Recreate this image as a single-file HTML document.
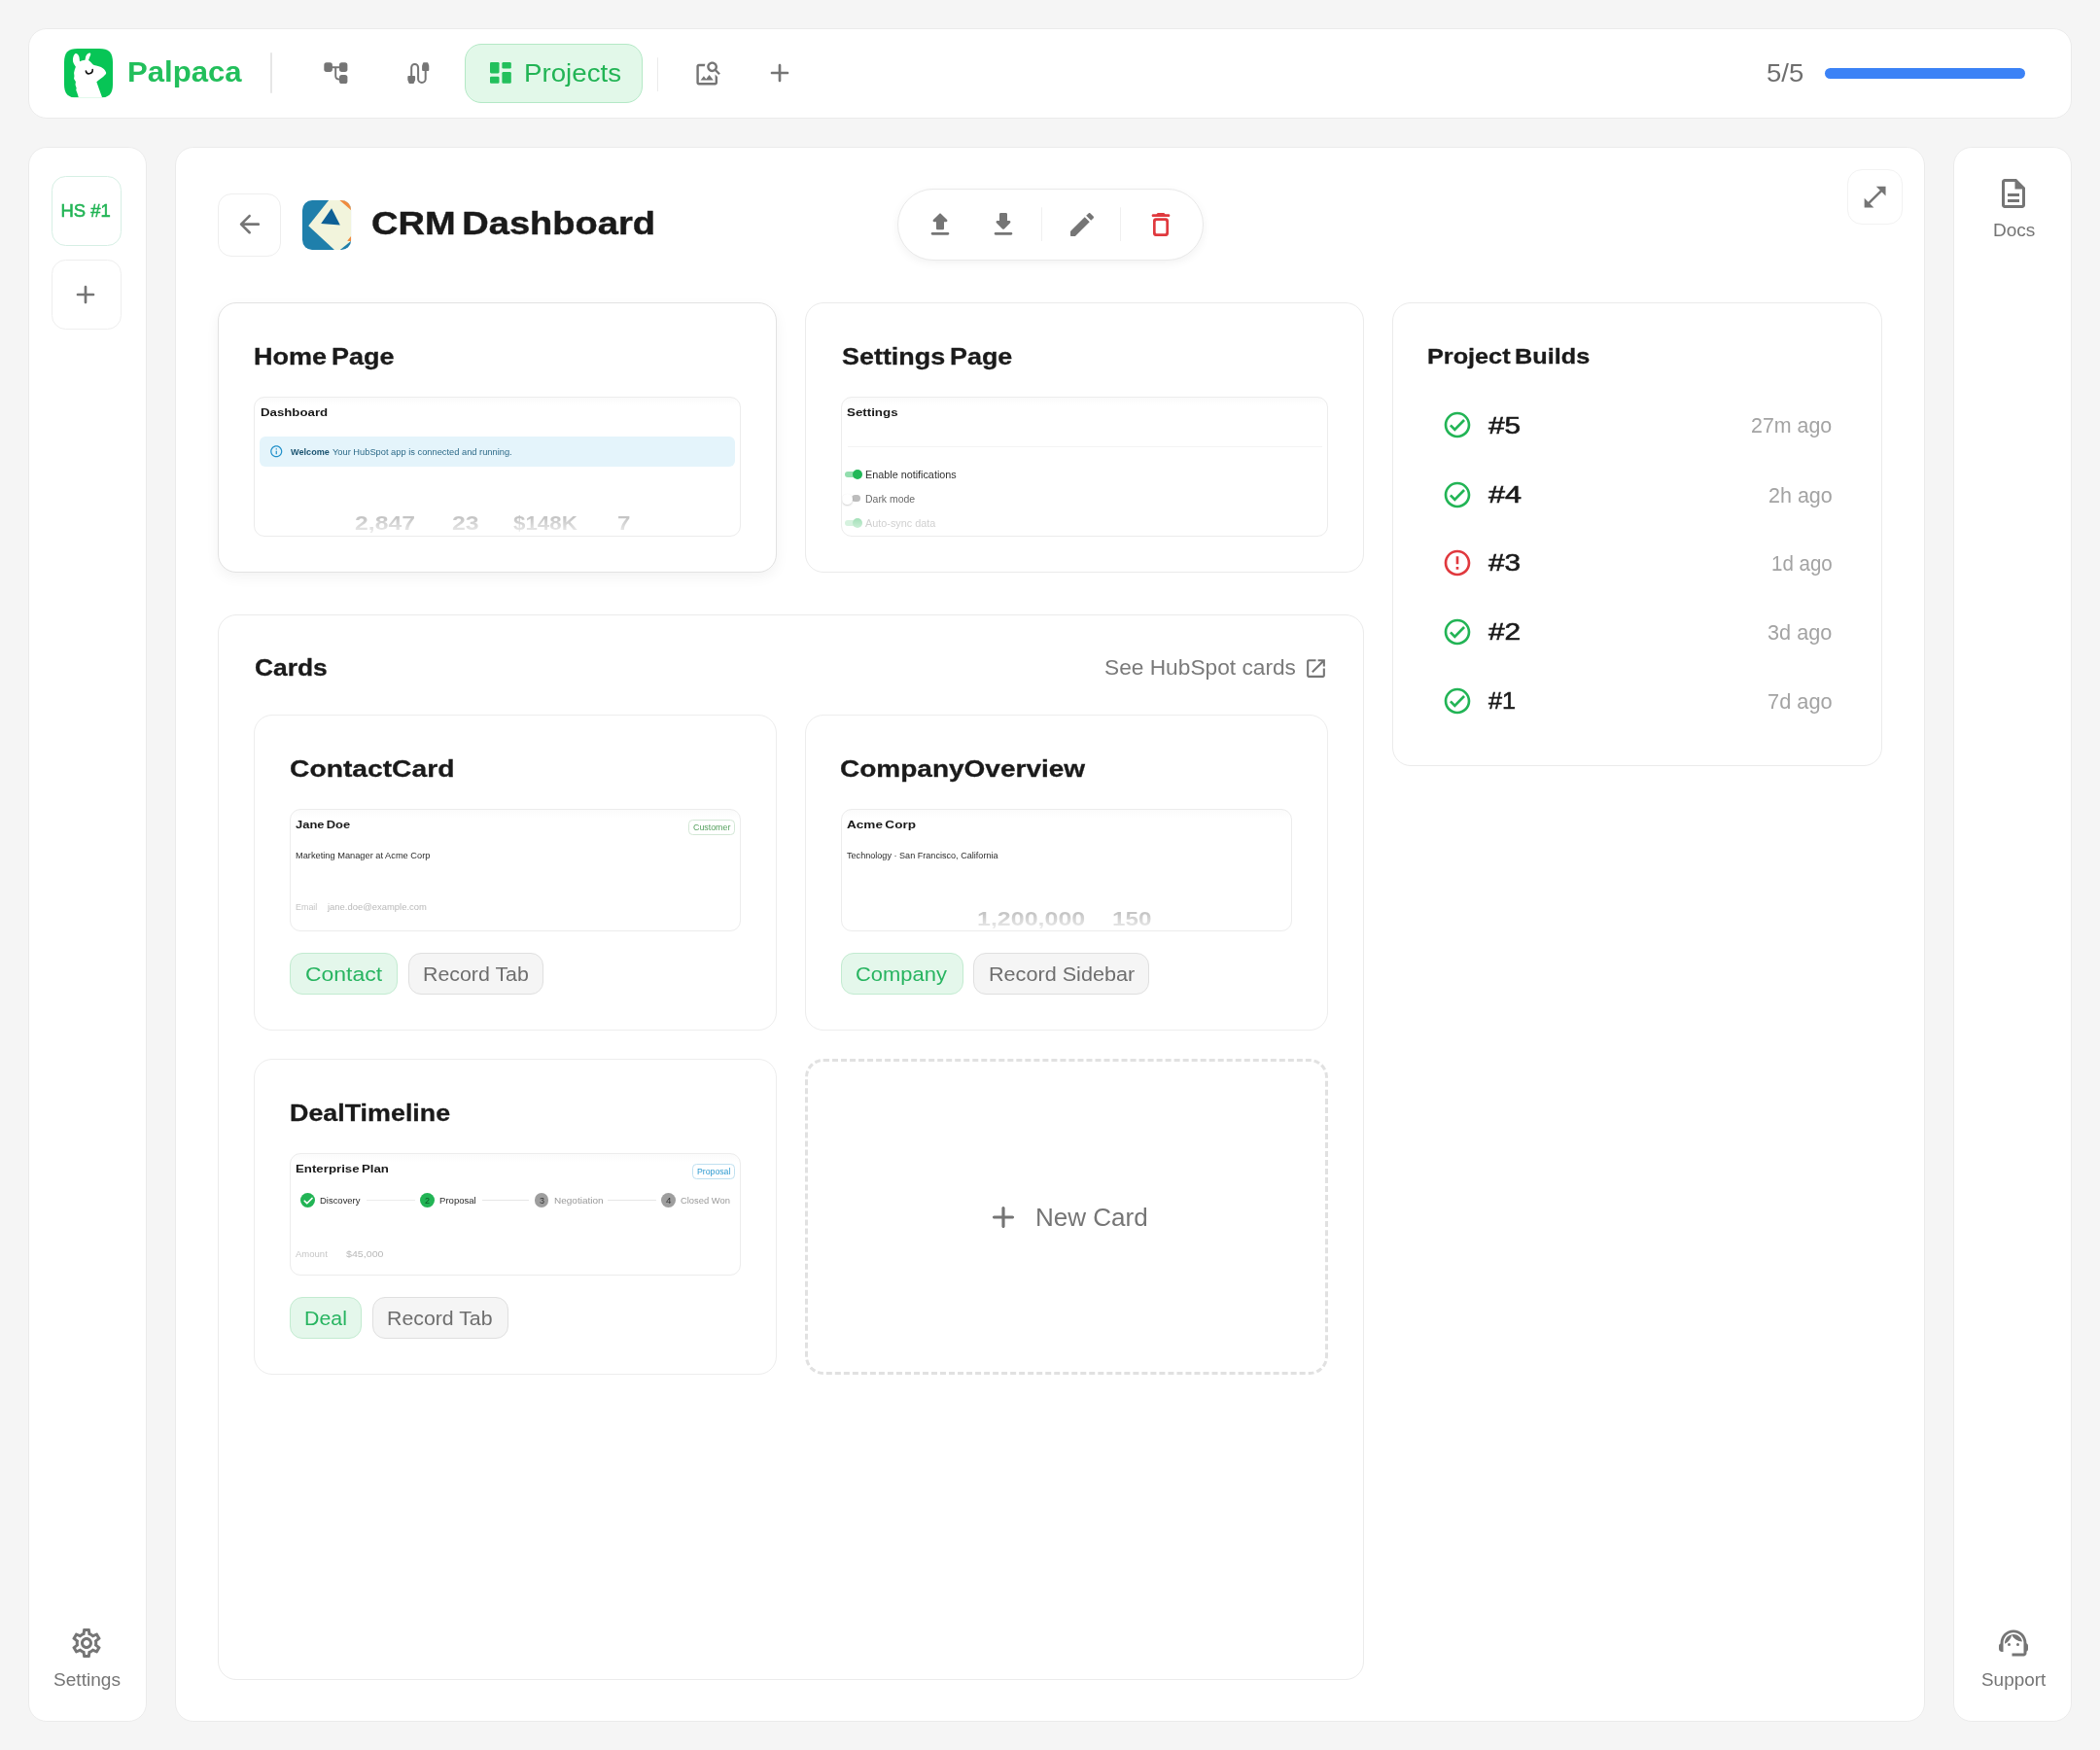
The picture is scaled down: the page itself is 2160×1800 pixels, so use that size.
<!DOCTYPE html>
<html lang="en"><head><meta charset="utf-8"><title>Palpaca - CRM Dashboard</title><style>
html,body{margin:0;padding:0}
body{width:2160px;height:1800px;background:#f5f5f5;position:relative;overflow:hidden;font-family:"Liberation Sans",sans-serif}
#root{position:absolute;left:0;top:0;width:2160px;height:1800px;will-change:transform}
.b{position:absolute;box-sizing:border-box}
.i{position:absolute;display:block;overflow:visible}
.t{position:absolute;white-space:nowrap;line-height:1;transform-origin:0 50%;display:block}
</style></head>
<body>
<div id="root">
<div class="b" style="left:29px;top:29px;width:2102px;height:93px;border-radius:19px;background:#fff;border:1px solid #ebebeb;"></div>
<div class="b" style="left:29px;top:151px;width:122px;height:1620px;border-radius:19px;background:#fff;border:1px solid #ebebeb;"></div>
<div class="b" style="left:180px;top:151px;width:1800px;height:1620px;border-radius:19px;background:#fff;border:1px solid #ebebeb;"></div>
<div class="b" style="left:2009px;top:151px;width:122px;height:1620px;border-radius:19px;background:#fff;border:1px solid #ebebeb;"></div>
<svg class="i" style="left:66px;top:50.3px" width="50" height="50.6" viewBox="0 0 100 100" preserveAspectRatio="none">
<defs><clipPath id="lc"><path d="M50 0H72C92 0 100 8 100 28V72C100 92 92 100 72 100H28C8 100 0 92 0 72V28C0 8 8 0 28 0z"/></clipPath></defs>
<g clip-path="url(#lc)"><rect width="100" height="100" fill="#07c556"/>
<path fill="#fff" d="M30 101 L28.9 97 L26.7 89.7 L24.5 84.6 L25.3 80.2 L23 73.6 L23.8 67 L20.1 61.2 L20.9 55.3 L20.1 49.5 L21.600 42.9 L23.8 37 L20 31 C17.5 27 17.5 22 18.5 18 C19.5 13 22 9.500 24.5 9.900 C28 10.5 30.5 15 31 18 L32 26 C35 24.5 39 23.5 43 23 L44.3 16.5 C46 12 50 8.500 53.8 9.200 C55.5 10 54 14 52.5 17 L50 23.8 C53 25.5 56 28.5 58 31 C60 33 63 34 66 34.5 C70 35.2 73 36.3 75.8 37.7 C80 39.8 84 43 86 48 C86.8 50.5 86 52 84 53.5 C82.5 55.5 81 57 79.5 58 L70.7 64 C69 65.2 67.5 66.5 66.7 67.8 L72 82.4 L78.8 101 Z"/>
<path d="M44.700 45.500 C45.5 49.5 48 51.5 51.5 51 C56 50.3 58.8 46.5 58.4 42.500" fill="none" stroke="#151515" stroke-width="3.2" stroke-linecap="round"/></g>
</svg>
<span class="t" style="left:130.64px;top:59.01px;font-size:29.36px;font-weight:700;color:#22bf5b;transform:scaleX(1.0591);">Palpaca</span>
<div class="b" style="left:278px;top:54px;width:2px;height:42px;border-radius:1px;background:#e6e6e6;"></div>
<svg class="i" style="left:333px;top:64px" width="25" height="22.5" viewBox="0 0 25 22.5" fill="#757575">
<rect x=".3" y=".3" width="8.6" height="9.6" rx="2.6"/><rect x="16" y=".3" width="8.400" height="9.600" rx="2.600"/><rect x="16" y="13" width="8.400" height="9.100" rx="2.600"/>
<path d="M8 5.200H17M12.200 5.200V14Q12.200 17.700 16.500 17.700" fill="none" stroke="#757575" stroke-width="1.9"/></svg>
<svg class="i" style="left:419px;top:64px" width="22.6" height="22.4" viewBox="0 0 22.6 22.4" fill="#757575">
<path d="M4.200 15V5.450A3.450 3.450 0 0 1 11.100 5.450V17.200A3.800 3.800 0 0 0 18.700 17.200V8.500" fill="none" stroke="#757575" stroke-width="2"/>
<path d="M1.300 14h5.800a1 1 0 0 1 1 1v3.200l-1.300 3.400a.8.800 0 0 1-.7.500H2.300a.8.800 0 0 1-.7-.5L.3 18.200V15a1 1 0 0 1 1-1z"/>
<path d="M16.800.300h3.800a.8.800 0 0 1 .7.500l1 3V8a1 1 0 0 1-1 1h-5.200a1 1 0 0 1-1-1V3.800l1-3a.8.800 0 0 1 .7-.5z"/></svg>
<div class="b" style="left:478px;top:45px;width:183px;height:60.5px;border-radius:17px;background:#e2f8e9;border:1px solid #b4e9c6;"></div>
<svg class="i" style="left:504.3px;top:64.3px" width="21.8" height="21.7" viewBox="0 0 21.8 21.7" fill="#22c05c">
<rect x="0" y="0" width="9.500" height="11.400" rx="1.300"/><rect x="0" y="14.800" width="9.500" height="6.900" rx="1.300"/><rect x="12.400" y="0" width="9.400" height="6.500" rx="1.300"/><rect x="12.400" y="10" width="9.400" height="11.700" rx="1.300"/></svg>
<span class="t" style="left:538.83px;top:63.01px;font-size:25.58px;color:#22b455;transform:scaleX(1.0825);">Projects</span>
<div class="b" style="left:676.3px;top:58.5px;width:1.0px;height:35.0px;border-radius:1px;background:#ebebeb;"></div>
<svg class="i" style="left:713.8px;top:61.0px" width="28.8" height="28.8" viewBox="0 0 24 24" fill="#757575" ><path d="M18 13v7H4V6h5.02c.05-.71.22-1.38.48-2H4c-1.1 0-2 .9-2 2v14c0 1.1.9 2 2 2h14c1.1 0 2-.9 2-2v-5l-2-2zm-1.5 5h-11l2.75-3.53 1.96 2.36 2.75-3.54L16.5 18zm2.8-9.11c.44-.7.7-1.51.7-2.39C20 4.01 17.99 2 15.5 2S11 4.01 11 6.5s2.01 4.5 4.49 4.5c.88 0 1.7-.26 2.39-.7L21 13.42 22.42 12 19.3 8.89zM15.5 9C14.12 9 13 7.88 13 6.5S14.12 4 15.5 4 18 5.12 18 6.5 16.88 9 15.5 9z"/></svg>
<svg class="i" style="left:786.2px;top:59.3px" width="32" height="32" viewBox="0 0 24 24" fill="#757575" ><path d="M18 13h-5v5c0 .550-.450 1-1 1s-1-.450-1-1v-5H6c-.550 0-1-.450-1-1s.450-1 1-1h5V6c0-.550.450-1 1-1s1 .450 1 1v5h5c.550 0 1 .450 1 1s-.450 1-1 1z"/></svg>
<span class="t" style="left:1816.89px;top:64.01px;font-size:24.85px;color:#6e6e6e;transform:scaleX(1.1094);">5/5</span>
<div class="b" style="left:1877px;top:70px;width:206px;height:11px;border-radius:6px;background:#3b82f6;"></div>
<div class="b" style="left:53px;top:181px;width:72px;height:72px;border-radius:14.5px;background:#fff;border:1px solid #d6efe4;"></div>
<span class="t" style="left:62.40px;top:208.01px;font-size:18.46px;color:#22b455;-webkit-text-stroke:0.55px #22b455;">HS #1</span>
<div class="b" style="left:53px;top:267px;width:72px;height:72px;border-radius:14.5px;background:#fff;border:1px solid #eeeeee;"></div>
<svg class="i" style="left:72.1px;top:287.2px" width="32" height="32" viewBox="0 0 24 24" fill="#757575" ><path d="M18 13h-5v5c0 .550-.450 1-1 1s-1-.450-1-1v-5H6c-.550 0-1-.450-1-1s.450-1 1-1h5V6c0-.550.450-1 1-1s1 .450 1 1v5h5c.550 0 1 .450 1 1s-.450 1-1 1z"/></svg>
<svg class="i" style="left:71.0px;top:1672.0px" width="36" height="36" viewBox="0 0 24 24" fill="#757575" ><path d="M19.43 12.98c.04-.32.07-.64.07-.98 0-.34-.03-.66-.07-.98l2.11-1.65c.19-.15.24-.42.12-.64l-2-3.46c-.09-.16-.26-.25-.44-.25-.06 0-.12.01-.17.03l-2.49 1c-.52-.4-1.08-.73-1.69-.98l-.38-2.65C14.46 2.18 14.25 2 14 2h-4c-.25 0-.46.18-.49.42l-.38 2.65c-.61.25-1.17.59-1.69.98l-2.49-1c-.06-.02-.12-.03-.18-.03-.17 0-.34.09-.43.25l-2 3.46c-.13.22-.07.49.12.64l2.11 1.65c-.04.32-.07.65-.07.98 0 .33.03.66.07.98l-2.11 1.65c-.19.15-.24.42-.12.64l2 3.46c.09.16.26.25.44.25.06 0 .12-.01.17-.03l2.49-1c.52.4 1.08.73 1.69.98l.38 2.65c.03.24.24.42.49.42h4c.25 0 .46-.18.49-.42l.38-2.65c.61-.25 1.17-.59 1.69-.98l2.49 1c.06.02.12.03.18.03.17 0 .34-.09.43-.25l2-3.46c.12-.22.07-.49-.12-.64l-2.11-1.65zm-1.98-1.71c.04.31.05.52.05.73 0 .21-.02.43-.05.73l-.14 1.13.89.7 1.08.84-.7 1.21-1.27-.51-1.04-.42-.9.68c-.43.32-.84.56-1.25.73l-1.06.43-.16 1.13-.2 1.35h-1.4l-.19-1.35-.16-1.13-1.06-.43c-.43-.18-.83-.41-1.23-.71l-.91-.7-1.06.43-1.27.51-.7-1.21 1.08-.84.89-.7-.14-1.13c-.03-.31-.05-.54-.05-.74s.02-.43.05-.73l.14-1.13-.89-.7-1.08-.84.7-1.21 1.27.51 1.04.42.9-.68c.43-.32.84-.56 1.25-.73l1.06-.43.16-1.13.2-1.35h1.39l.19 1.35.16 1.13 1.06.43c.43.18.83.41 1.23.71l.91.7 1.06-.43 1.27-.51.7 1.21-1.07.85-.89.7.14 1.13zM12 8c-2.21 0-4 1.79-4 4s1.79 4 4 4 4-1.79 4-4-1.79-4-4-4zm0 6c-1.1 0-2-.9-2-2s.9-2 2-2 2 .9 2 2-.9 2-2 2z"/></svg>
<span class="t" style="left:54.50px;top:1718.00px;font-size:19.19px;color:#757575;transform:scaleX(0.9951);">Settings</span>
<svg class="i" style="left:2053.0px;top:181.0px" width="36" height="36" viewBox="0 0 24 24" fill="#757575" ><path d="M8 16h8v2H8zm0-4h8v2H8zm6-10H6c-1.1 0-2 .9-2 2v16c0 1.1.89 2 1.990 2H18c1.100 0 2-.9 2-2V8l-6-6zm4 18H6V4h7v5h5v11z"/></svg>
<span class="t" style="left:2049.69px;top:228.01px;font-size:18.9px;color:#757575;transform:scaleX(1.0074);">Docs</span>
<svg class="i" style="left:2053.0px;top:1672.0px" width="36" height="36" viewBox="0 0 24 24" fill="#757575" ><path d="M21 12.22C21 6.73 16.74 3 12 3c-4.69 0-9 3.65-9 9.28-.6.34-1 .98-1 1.720v2c0 1.100.900 2 2 2h1v-6.100c0-3.870 3.130-7 7-7s7 3.130 7 7V19h-8v2h8c1.100 0 2-.900 2-2v-1.220c.590-.310 1-.920 1-1.640v-2.300c0-.700-.410-1.310-1-1.620z"/><circle cx="9" cy="13" r="1"/><circle cx="15" cy="13" r="1"/><path d="M18 11.030C17.520 8.180 15.040 6 12.050 6c-3.030 0-6.290 2.510-6.030 6.450 2.470-1.010 4.330-3.210 4.860-5.890 1.310 2.630 4 4.440 7.120 4.470z"/></svg>
<span class="t" style="left:2037.90px;top:1719.01px;font-size:18.6px;color:#757575;transform:scaleX(1.0173);">Support</span>
<div class="b" style="left:224px;top:199px;width:65px;height:65px;border-radius:14px;background:#fff;border:1px solid #eeeeee;"></div>
<svg class="i" style="left:240.85px;top:215.35px" width="31.3" height="31.3" viewBox="0 0 24 24" fill="#757575" ><path d="M19 11H7.830l4.880-4.880c.390-.390.390-1.030 0-1.420-.390-.390-1.020-.390-1.410 0l-6.590 6.590c-.390.390-.390 1.020 0 1.410l6.590 6.590c.390.390 1.020.390 1.410 0 .390-.390.390-1.020 0-1.410L7.830 13H19c.550 0 1-.450 1-1s-.450-1-1-1z"/></svg>
<svg class="i" style="left:311px;top:206px" width="50.2" height="51" viewBox="0 0 100 100" preserveAspectRatio="none">
<defs><clipPath id="pc"><rect width="100" height="100" rx="20"/></clipPath></defs>
<g clip-path="url(#pc)"><rect width="100" height="100" fill="#1f7fab"/>
<path d="M12.400 51.400L54 0H100V82L77.400 100H65.700Z" fill="#f2f4dc"/>
<path d="M76.600 0H100V20Z" fill="#f08a3e"/>
<path d="M100 72V83L92 82Z" fill="#f08a3e"/>
<path d="M59.900 16.400L77.400 50L38.300 47.100Z" fill="#0e6096"/></g></svg>
<span class="t" style="left:381.98px;top:213.01px;font-size:33.87px;font-weight:700;color:#1a1a1a;transform:scaleX(1.1228);-webkit-text-stroke:0.45px #1a1a1a;word-spacing:-3.39px;">CRM Dashboard</span>
<div class="b" style="left:922.5px;top:194px;width:315.0px;height:73.5px;border-radius:37px;background:#fff;border:1px solid #e9e9e9;box-shadow:0 3px 10px rgba(0,0,0,.05);"></div>
<svg class="i" style="left:950.8px;top:215.0px" width="32" height="32" viewBox="0 0 24 24" fill="#757575" ><path d="M10 16h4c.55 0 1-.45 1-1v-5h1.590c.890 0 1.340-1.080.710-1.710L12.710 3.700c-.390-.390-1.020-.390-1.410 0L6.710 8.290c-.630.630-.190 1.710.700 1.710H9v5c0 .550.450 1 1 1zm-4 2h12c.550 0 1 .450 1 1s-.450 1-1 1H6c-.550 0-1-.450-1-1s.450-1 1-1z"/></svg>
<svg class="i" style="left:1015.7px;top:215.0px" width="32" height="32" viewBox="0 0 24 24" fill="#757575" ><path d="M16.590 9H15V4c0-.550-.450-1-1-1h-4c-.550 0-1 .450-1 1v5H7.410c-.890 0-1.340 1.080-.710 1.710l4.590 4.590c.390.390 1.020.390 1.410 0l4.590-4.590c.630-.630.190-1.710-.700-1.710zM5 19c0 .550.450 1 1 1h12c.550 0 1-.450 1-1s-.450-1-1-1H6c-.550 0-1 .450-1 1z"/></svg>
<div class="b" style="left:1071.2px;top:212.5px;width:1.0px;height:35.0px;border-radius:1px;background:#f0f0f0;"></div>
<svg class="i" style="left:1096.7px;top:215.0px" width="32" height="32" viewBox="0 0 24 24" fill="#757575" ><path d="M3 17.460v3.040c0 .280.220.500.500.500h3.040c.130 0 .260-.050.350-.150L17.810 9.940l-3.750-3.750L3.150 17.100c-.100.100-.150.220-.150.360zM20.710 7.040c.390-.390.390-1.020 0-1.410l-2.340-2.340c-.390-.390-1.020-.390-1.410 0l-1.830 1.830 3.750 3.750 1.830-1.830z"/></svg>
<div class="b" style="left:1152.2px;top:212.5px;width:1.0px;height:35.0px;border-radius:1px;background:#f0f0f0;"></div>
<svg class="i" style="left:1177.7px;top:215.0px" width="32" height="32" viewBox="0 0 24 24" fill="#e0393e" ><path d="M6 19c0 1.100.900 2 2 2h8c1.100 0 2-.900 2-2V9c0-1.100-.900-2-2-2H8c-1.100 0-2 .900-2 2v10zM9 9h6c.550 0 1 .450 1 1v8c0 .550-.450 1-1 1H9c-.550 0-1-.450-1-1v-8c0-.550.450-1 1-1zm6.500-5l-.710-.710c-.180-.180-.440-.290-.700-.290H9.910c-.260 0-.520.110-.700.290L8.500 4H6c-.550 0-1 .450-1 1s.450 1 1 1h12c.550 0 1-.450 1-1s-.450-1-1-1h-2.500z"/></svg>
<div class="b" style="left:1900px;top:174px;width:57px;height:57px;border-radius:15px;background:#fff;border:1px solid #f2f2f2;"></div>
<svg class="i" style="left:1913.8px;top:187.5px" width="29.2" height="29.2" viewBox="0 0 24 24" fill="#757575" ><path d="M21 11V3h-8l3.29 3.29-10 10L3 13v8h8l-3.29-3.29 10-10z"/></svg>
<div class="b" style="left:224px;top:311px;width:575px;height:278px;border-radius:19px;background:#fff;border:1px solid #e2e2e2;box-shadow:0 5px 14px rgba(0,0,0,.05);"></div>
<span class="t" style="left:260.91px;top:355.02px;font-size:24.71px;font-weight:700;color:#1a1a1a;transform:scaleX(1.0949);-webkit-text-stroke:0.3px #1a1a1a;word-spacing:-2.47px;">Home Page</span>
<div class="b" style="left:261px;top:408px;width:501px;height:144px;border-radius:11px;background:linear-gradient(#fbfbfb,#fff 9px);border:1px solid #ececec;overflow:hidden;"></div>
<span class="t" style="left:267.50px;top:418.01px;font-size:11.63px;font-weight:700;color:#1a1a1a;transform:scaleX(1.1383);">Dashboard</span>
<div class="b" style="left:267.3px;top:449.4px;width:489.2px;height:30.4px;border-radius:6px;background:#e4f4fb;"></div>
<svg class="i" style="left:276.95px;top:457.45px" width="14.5" height="14.5" viewBox="0 0 24 24" fill="#1f8fc9" ><path d="M11 7h2v2h-2zm0 4h2v6h-2zm1-9C6.480 2 2 6.480 2 12s4.480 10 10 10 10-4.480 10-10S17.520 2 12 2zm0 18c-4.410 0-8-3.590-8-8s3.590-8 8-8 8 3.590 8 8-3.590 8-8 8z"/></svg>
<span class="t" style="left:299.20px;top:461.01px;font-size:9.2px;font-weight:700;color:#1d5572;transform:scaleX(0.9935);">Welcome</span>
<span class="t" style="left:341.50px;top:461.01px;font-size:9.2px;color:#2d6a88;transform:scaleX(1.0117);">Your HubSpot app is connected and running.</span>
<span class="t" style="left:364.70px;top:528.01px;font-size:20.93px;font-weight:700;color:transparent;transform:scaleX(1.1833);background:linear-gradient(#c4c4c4 20%,#ececec 95%);-webkit-background-clip:text;background-clip:text;">2,847</span>
<span class="t" style="left:464.80px;top:528.01px;font-size:20.93px;font-weight:700;color:transparent;transform:scaleX(1.1884);background:linear-gradient(#c4c4c4 20%,#ececec 95%);-webkit-background-clip:text;background-clip:text;">23</span>
<span class="t" style="left:528.30px;top:528.01px;font-size:20.93px;font-weight:700;color:transparent;transform:scaleX(1.0675);background:linear-gradient(#c4c4c4 20%,#ececec 95%);-webkit-background-clip:text;background-clip:text;">$148K</span>
<span class="t" style="left:634.60px;top:528.01px;font-size:20.93px;font-weight:700;color:transparent;transform:scaleX(1.1545);background:linear-gradient(#c4c4c4 20%,#ececec 95%);-webkit-background-clip:text;background-clip:text;">7</span>
<div class="b" style="left:828px;top:311px;width:575px;height:278px;border-radius:19px;background:#fff;border:1px solid #ebebeb;"></div>
<span class="t" style="left:865.70px;top:355.02px;font-size:24.71px;font-weight:700;color:#1a1a1a;transform:scaleX(1.0896);-webkit-text-stroke:0.3px #1a1a1a;word-spacing:-2.47px;">Settings Page</span>
<div class="b" style="left:865px;top:408px;width:501px;height:144px;border-radius:11px;background:linear-gradient(#fbfbfb,#fff 9px);border:1px solid #ececec;overflow:hidden;"></div>
<span class="t" style="left:871.20px;top:418.01px;font-size:11.63px;font-weight:700;color:#1a1a1a;transform:scaleX(1.1455);">Settings</span>
<div class="b" style="left:872px;top:458.9px;width:488px;height:1.0px;border-radius:0px;background:#f3f3f3;"></div>
<div class="b" style="left:868.6px;top:484.8px;width:15.4px;height:6.1px;border-radius:3.5px;background:#93deae;"></div>
<div class="b" style="left:876.9px;top:482.5px;width:10.2px;height:10.3px;border-radius:6px;background:#22b858;"></div>
<span class="t" style="left:889.70px;top:484.00px;font-size:10.4px;color:#2f2f2f;transform:scaleX(1.0399);">Enable notifications</span>
<div class="b" style="left:876px;top:509.4px;width:8.9px;height:6.6px;border-radius:3.5px;background:#bdbdbd;"></div>
<div class="b" style="left:865.9px;top:507.6px;width:11.0px;height:11.0px;border-radius:6px;background:#fff;box-shadow:0 1px 2px rgba(0,0,0,.2);clip-path:inset(-3px -3px -3px 0.3px);"></div>
<span class="t" style="left:889.70px;top:509.00px;font-size:10.4px;color:#6a6a6a;transform:scaleX(1.0071);">Dark mode</span>
<div class="b" style="left:868.6px;top:535.3px;width:15.4px;height:6.1px;border-radius:3.5px;background:#d6f2df;"></div>
<div class="b" style="left:876.6px;top:533.1px;width:10.2px;height:10.3px;border-radius:6px;background:linear-gradient(#a3e0b8,#c9eed5);"></div>
<span class="t" style="left:889.70px;top:534.01px;font-size:10.4px;color:#d0d0d0;transform:scaleX(1.0441);">Auto-sync data</span>
<div class="b" style="left:1432px;top:311px;width:504px;height:476.5px;border-radius:19px;background:#fff;border:1px solid #ebebeb;"></div>
<span class="t" style="left:1468.39px;top:355.01px;font-size:22.82px;font-weight:700;color:#1a1a1a;transform:scaleX(1.1063);-webkit-text-stroke:0.3px #1a1a1a;word-spacing:-2.28px;">Project Builds</span>
<svg class="i" style="left:1483.2px;top:421.2px" width="32" height="32" viewBox="0 0 24 24" fill="#22b455" ><path d="M12 2C6.48 2 2 6.48 2 12s4.48 10 10 10 10-4.48 10-10S17.52 2 12 2zm0 18c-4.41 0-8-3.590-8-8s3.590-8 8-8 8 3.590 8 8-3.590 8-8 8zm4.590-12.420L10 14.170l-2.590-2.580L6 13l4 4 8-8z"/></svg>
<span class="t" style="left:1531.00px;top:426.01px;font-size:24.13px;color:#1a1a1a;transform:scaleX(1.2340);-webkit-text-stroke:0.6px #1a1a1a;">#5</span>
<span class="t" style="left:1801.07px;top:426.01px;font-size:22.97px;color:#a3a3a3;transform:scaleX(0.9314);">27m ago</span>
<svg class="i" style="left:1483.2px;top:492.6px" width="32" height="32" viewBox="0 0 24 24" fill="#22b455" ><path d="M12 2C6.48 2 2 6.48 2 12s4.48 10 10 10 10-4.48 10-10S17.52 2 12 2zm0 18c-4.41 0-8-3.590-8-8s3.590-8 8-8 8 3.590 8 8-3.590 8-8 8zm4.590-12.420L10 14.170l-2.590-2.580L6 13l4 4 8-8z"/></svg>
<span class="t" style="left:1531.00px;top:497.01px;font-size:24.13px;color:#1a1a1a;transform:scaleX(1.2681);-webkit-text-stroke:0.6px #1a1a1a;">#4</span>
<span class="t" style="left:1818.56px;top:498.00px;font-size:22.97px;color:#a3a3a3;transform:scaleX(0.9361);">2h ago</span>
<svg class="i" style="left:1483.2px;top:562.7px" width="32" height="32" viewBox="0 0 24 24" fill="#e0393e" ><path d="M11 15h2v2h-2zm0-8h2v6h-2zm.990-5C6.470 2 2 6.480 2 12s4.470 10 9.990 10C17.520 22 22 17.520 22 12S17.520 2 11.990 2zM12 20c-4.420 0-8-3.580-8-8s3.580-8 8-8 8 3.580 8 8-3.580 8-8 8z"/></svg>
<span class="t" style="left:1531.00px;top:567.01px;font-size:24.13px;color:#1a1a1a;transform:scaleX(1.2340);-webkit-text-stroke:0.6px #1a1a1a;">#3</span>
<span class="t" style="left:1821.51px;top:568.01px;font-size:22.97px;color:#a3a3a3;transform:scaleX(0.8937);">1d ago</span>
<svg class="i" style="left:1483.2px;top:633.8px" width="32" height="32" viewBox="0 0 24 24" fill="#22b455" ><path d="M12 2C6.48 2 2 6.48 2 12s4.48 10 10 10 10-4.48 10-10S17.52 2 12 2zm0 18c-4.41 0-8-3.590-8-8s3.590-8 8-8 8 3.590 8 8-3.590 8-8 8zm4.590-12.420L10 14.170l-2.590-2.580L6 13l4 4 8-8z"/></svg>
<span class="t" style="left:1531.00px;top:638.02px;font-size:24.13px;color:#1a1a1a;transform:scaleX(1.2340);-webkit-text-stroke:0.6px #1a1a1a;">#2</span>
<span class="t" style="left:1818.00px;top:639.00px;font-size:22.97px;color:#a3a3a3;transform:scaleX(0.9442);">3d ago</span>
<svg class="i" style="left:1483.2px;top:704.6px" width="32" height="32" viewBox="0 0 24 24" fill="#22b455" ><path d="M12 2C6.48 2 2 6.48 2 12s4.48 10 10 10 10-4.48 10-10S17.52 2 12 2zm0 18c-4.41 0-8-3.590-8-8s3.590-8 8-8 8 3.590 8 8-3.590 8-8 8zm4.590-12.420L10 14.170l-2.590-2.580L6 13l4 4 8-8z"/></svg>
<span class="t" style="left:1531.00px;top:709.01px;font-size:24.13px;color:#1a1a1a;transform:scaleX(1.0448);-webkit-text-stroke:0.6px #1a1a1a;">#1</span>
<span class="t" style="left:1817.65px;top:710.00px;font-size:22.97px;color:#a3a3a3;transform:scaleX(0.9492);">7d ago</span>
<div class="b" style="left:224px;top:632px;width:1179px;height:1096px;border-radius:19px;background:#fff;border:1px solid #ebebeb;"></div>
<span class="t" style="left:261.90px;top:675.01px;font-size:24.13px;font-weight:700;color:#1a1a1a;transform:scaleX(1.0932);-webkit-text-stroke:0.3px #1a1a1a;">Cards</span>
<span class="t" style="left:1136.10px;top:676.00px;font-size:21.22px;color:#7a7a7a;transform:scaleX(1.0704);">See HubSpot cards</span>
<svg class="i" style="left:1341.0px;top:674.9px" width="25" height="25" viewBox="0 0 24 24" fill="#757575" ><path d="M19 19H5V5h7V3H5c-1.110 0-2 .900-2 2v14c0 1.100.890 2 2 2h14c1.100 0 2-.900 2-2v-7h-2v7zM14 3v2h3.590l-9.830 9.830 1.410 1.410L19 6.410V10h2V3h-7z"/></svg>
<div class="b" style="left:261px;top:735px;width:538px;height:325px;border-radius:19px;background:#fff;border:1px solid #ededed;"></div>
<span class="t" style="left:297.84px;top:779.01px;font-size:24.42px;font-weight:700;color:#1a1a1a;transform:scaleX(1.1568);-webkit-text-stroke:0.3px #1a1a1a;">ContactCard</span>
<div class="b" style="left:298px;top:832px;width:464px;height:126px;border-radius:11px;background:linear-gradient(#fbfbfb,#fff 9px);border:1px solid #ececec;overflow:hidden;"></div>
<span class="t" style="left:304.40px;top:842.01px;font-size:11.63px;font-weight:700;color:#1a1a1a;transform:scaleX(1.1124);word-spacing:-1.16px;">Jane Doe</span>
<div class="b" style="left:707.8px;top:843.2px;width:48.7px;height:15.4px;border-radius:4.5px;background:#fff;border:1px solid #d3e7d6;"></div>
<span class="t" style="left:713.00px;top:847.00px;font-size:8.6px;color:#55a05e;transform:scaleX(1.0298);">Customer</span>
<span class="t" style="left:304.20px;top:875.01px;font-size:9.7px;color:#2b2b2b;transform:scaleX(0.9553);">Marketing Manager at Acme Corp</span>
<span class="t" style="left:304.20px;top:928.01px;font-size:9.6px;color:#c6c6c6;transform:scaleX(0.9305);">Email</span>
<span class="t" style="left:337.38px;top:928.01px;font-size:9.6px;color:#b9b9b9;transform:scaleX(0.9827);">jane.doe@example.com</span>
<div class="b" style="left:298.3px;top:980.0px;width:110.4px;height:42.7px;border-radius:13px;background:#e4f7eb;border:1px solid #c2ebd0;"></div>
<span class="t" style="left:313.51px;top:991.00px;font-size:21.08px;color:#27b460;transform:scaleX(1.0894);">Contact</span>
<div class="b" style="left:420.3px;top:980.0px;width:138.4px;height:42.7px;border-radius:13px;background:#f5f5f5;border:1px solid #dfdfdf;"></div>
<span class="t" style="left:434.59px;top:991.00px;font-size:21.08px;color:#6e6e6e;transform:scaleX(1.0135);">Record Tab</span>
<div class="b" style="left:828px;top:735px;width:538px;height:325px;border-radius:19px;background:#fff;border:1px solid #ededed;"></div>
<span class="t" style="left:864.35px;top:779.01px;font-size:24.42px;font-weight:700;color:#1a1a1a;transform:scaleX(1.1472);-webkit-text-stroke:0.3px #1a1a1a;">CompanyOverview</span>
<div class="b" style="left:865px;top:832px;width:464px;height:126px;border-radius:11px;background:linear-gradient(#fbfbfb,#fff 9px);border:1px solid #ececec;overflow:hidden;"></div>
<span class="t" style="left:871.40px;top:842.01px;font-size:11.63px;font-weight:700;color:#1a1a1a;transform:scaleX(1.1671);word-spacing:-1.16px;">Acme Corp</span>
<span class="t" style="left:871.20px;top:875.01px;font-size:9.7px;color:#2b2b2b;transform:scaleX(0.9378);">Technology · San Francisco, California</span>
<span class="t" style="left:1005.10px;top:935.01px;font-size:20.93px;font-weight:700;color:transparent;transform:scaleX(1.1953);background:linear-gradient(#c4c4c4 20%,#ececec 95%);-webkit-background-clip:text;background-clip:text;">1,200,000</span>
<span class="t" style="left:1143.84px;top:935.01px;font-size:20.93px;font-weight:700;color:transparent;transform:scaleX(1.1571);background:linear-gradient(#c4c4c4 20%,#ececec 95%);-webkit-background-clip:text;background-clip:text;">150</span>
<div class="b" style="left:865.2px;top:980.0px;width:125.5px;height:42.7px;border-radius:13px;background:#e4f7eb;border:1px solid #c2ebd0;"></div>
<span class="t" style="left:880.36px;top:991.00px;font-size:21.08px;color:#27b460;transform:scaleX(1.0405);">Company</span>
<div class="b" style="left:1001.3px;top:980.0px;width:180.7px;height:42.7px;border-radius:13px;background:#f5f5f5;border:1px solid #dfdfdf;"></div>
<span class="t" style="left:1016.57px;top:991.00px;font-size:21.08px;color:#6e6e6e;transform:scaleX(1.0252);">Record Sidebar</span>
<div class="b" style="left:261px;top:1089px;width:538px;height:325px;border-radius:19px;background:#fff;border:1px solid #ededed;"></div>
<span class="t" style="left:297.70px;top:1133.01px;font-size:24.42px;font-weight:700;color:#1a1a1a;transform:scaleX(1.1000);-webkit-text-stroke:0.3px #1a1a1a;">DealTimeline</span>
<div class="b" style="left:298px;top:1186px;width:464px;height:126px;border-radius:11px;background:linear-gradient(#fbfbfb,#fff 9px);border:1px solid #ececec;overflow:hidden;"></div>
<span class="t" style="left:304.40px;top:1196.01px;font-size:11.63px;font-weight:700;color:#1a1a1a;transform:scaleX(1.1403);word-spacing:-1.16px;">Enterprise Plan</span>
<div class="b" style="left:712.3px;top:1197.3px;width:44.2px;height:15.3px;border-radius:4.5px;background:#fff;border:1px solid #bfe0f0;"></div>
<span class="t" style="left:717.00px;top:1201.00px;font-size:8.6px;color:#2f9bd0;transform:scaleX(1.0145);">Proposal</span>
<div class="b" style="left:309.2px;top:1227.3999999999999px;width:14.8px;height:14.8px;border-radius:8px;background:#22b455;"></div>
<svg class="i" style="left:310.6px;top:1228.8px" width="12" height="12" viewBox="0 0 24 24" fill="none" stroke="#fff" stroke-width="3.4" stroke-linecap="round" stroke-linejoin="round"><path d="M4.5 12.5l5 5L20 7"/></svg>
<span class="t" style="left:329.30px;top:1231.01px;font-size:9.2px;color:#2b2b2b;transform:scaleX(1.0286);">Discovery</span>
<div class="b" style="left:376.6px;top:1234.3px;width:50.7px;height:1.0px;border-radius:0px;background:#ebebeb;"></div>
<div class="b" style="left:431.8px;top:1227.3999999999999px;width:14.8px;height:14.8px;border-radius:8px;background:#22b455;"></div>
<span class="t" style="left:436.90px;top:1230.02px;font-size:9.4px;color:#0b5c28;transform:scaleX(0.9600);">2</span>
<span class="t" style="left:451.60px;top:1231.01px;font-size:9.2px;color:#2b2b2b;transform:scaleX(1.0409);">Proposal</span>
<div class="b" style="left:496.1px;top:1234.3px;width:47.9px;height:1.0px;border-radius:0px;background:#e6e6e6;"></div>
<div class="b" style="left:549.6px;top:1227.3999999999999px;width:14.8px;height:14.8px;border-radius:8px;background:#9e9e9e;"></div>
<span class="t" style="left:554.60px;top:1230.02px;font-size:9.4px;color:#333;transform:scaleX(0.9600);">3</span>
<span class="t" style="left:569.60px;top:1231.01px;font-size:9.2px;color:#9a9a9a;transform:scaleX(1.0891);">Negotiation</span>
<div class="b" style="left:625.2px;top:1234.3px;width:50.1px;height:1.0px;border-radius:0px;background:#e6e6e6;"></div>
<div class="b" style="left:680.1px;top:1227.3999999999999px;width:14.8px;height:14.8px;border-radius:8px;background:#9e9e9e;"></div>
<span class="t" style="left:685.00px;top:1230.02px;font-size:9.4px;color:#333;transform:scaleX(1.0400);">4</span>
<span class="t" style="left:700.40px;top:1231.01px;font-size:9.2px;color:#9a9a9a;transform:scaleX(1.0208);">Closed Won</span>
<span class="t" style="left:304.20px;top:1285.01px;font-size:9.6px;color:#c6c6c6;transform:scaleX(0.9911);">Amount</span>
<span class="t" style="left:355.90px;top:1285.01px;font-size:9.6px;color:#b9b9b9;transform:scaleX(1.1094);">$45,000</span>
<div class="b" style="left:298.3px;top:1334.1px;width:73.5px;height:42.7px;border-radius:13px;background:#e4f7eb;border:1px solid #c2ebd0;"></div>
<span class="t" style="left:313.29px;top:1345.00px;font-size:21.08px;color:#27b460;transform:scaleX(1.0128);">Deal</span>
<div class="b" style="left:383px;top:1334.1px;width:139.7px;height:42.7px;border-radius:13px;background:#f5f5f5;border:1px solid #dfdfdf;"></div>
<span class="t" style="left:398.29px;top:1345.00px;font-size:21.08px;color:#6e6e6e;transform:scaleX(1.0107);">Record Tab</span>
<div class="b" style="left:828px;top:1089px;width:538px;height:325px;border-radius:19px;border:3px dashed #e1e1e1;background:#fff;"></div>
<svg class="i" style="left:1012.8px;top:1232.5px" width="38" height="38" viewBox="0 0 24 24" fill="#757575" ><path d="M18 13h-5v5c0 .550-.450 1-1 1s-1-.450-1-1v-5H6c-.550 0-1-.450-1-1s.450-1 1-1h5V6c0-.550.450-1 1-1s1 .450 1 1v5h5c.550 0 1 .450 1 1s-.450 1-1 1z"/></svg>
<span class="t" style="left:1065.34px;top:1240.02px;font-size:25.29px;color:#757575;transform:scaleX(1.0299);">New Card</span>
</div>
</body></html>
